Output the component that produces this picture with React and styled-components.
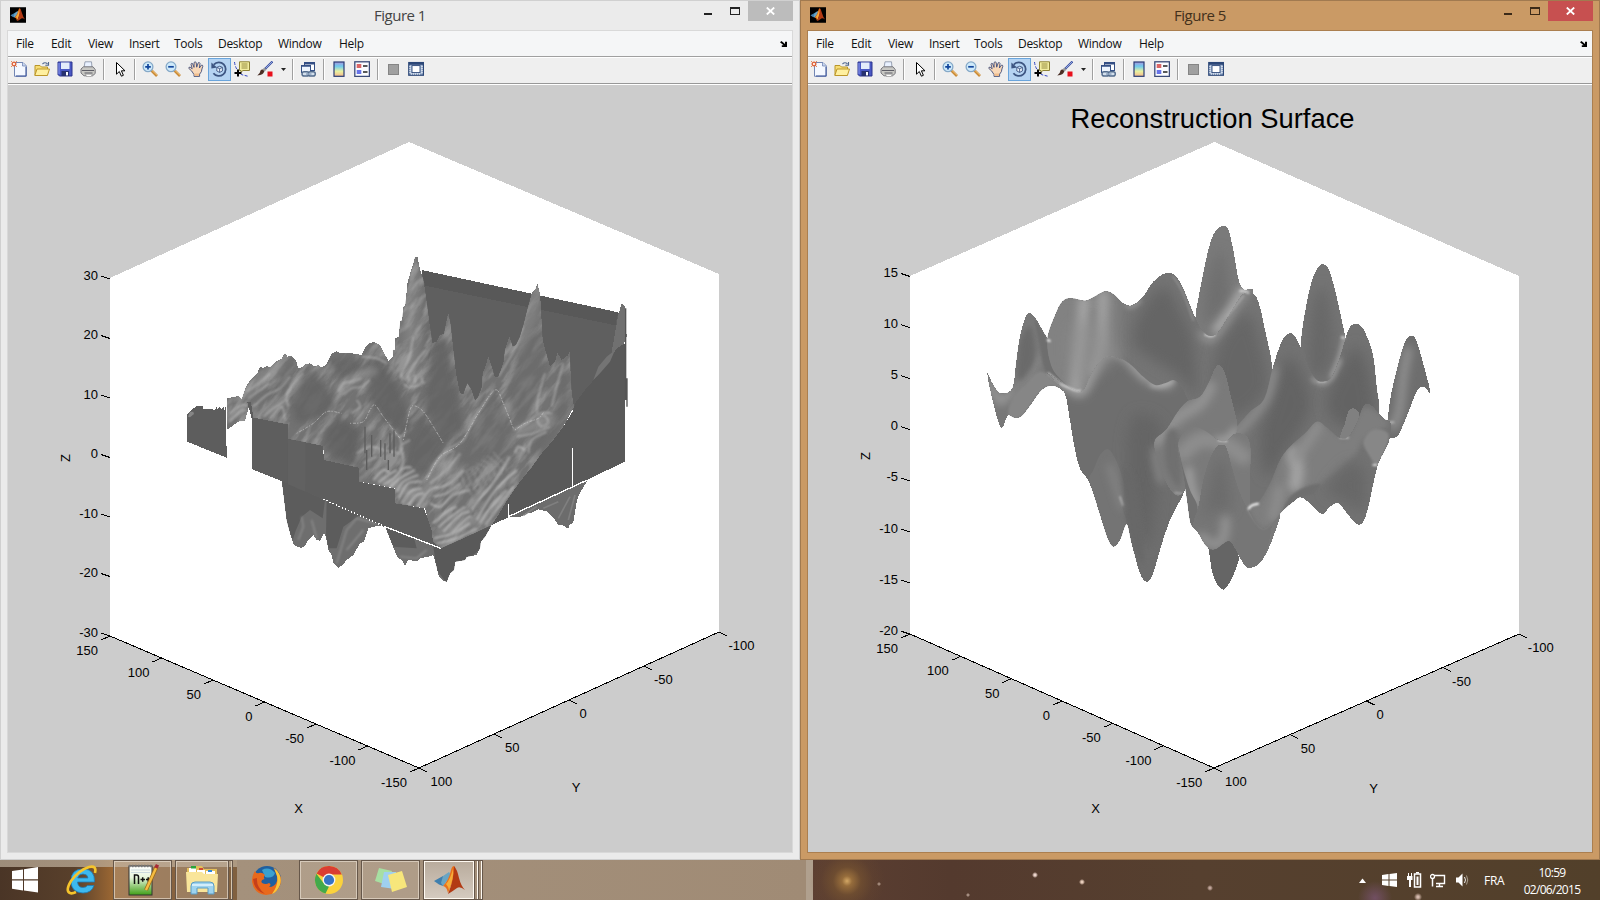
import React from "react";
import styled, { createGlobalStyle } from "styled-components";

const GlobalStyle = createGlobalStyle`
  * { box-sizing: border-box; }
  html, body { margin: 0; padding: 0; overflow: hidden; }
  body { width: 1600px; height: 900px; font-family: "Open Sans", "Noto Sans", sans-serif; }
`;

const Desktop = styled.div`
  display: flex;
  flex-direction: column;
  width: 1600px;
  height: 900px;
  overflow: hidden;
  background: #54402c;
`;

const Windows = styled.main`
  display: grid;
  grid-template-columns: 800px 800px;
  height: 860px;
`;

const Frame = styled.section`
  display: flex;
  flex-direction: column;
  height: 860px;
  padding: 0 7px 6px;
  border: 1px solid ${(p) => (p.$active ? "#a17a50" : "#d0d0d0")};
  background: ${(p) => (p.$active ? "#ca9a65" : "#ebebeb")};
`;

const TitleBar = styled.header`
  display: grid;
  grid-template-columns: 110px 1fr 110px;
  height: 29px;
  flex: none;
  align-items: start;
`;

const AppIcon = styled.div`
  padding: 6px 0 0 2px;
  line-height: 0;
`;

const Title = styled.h1`
  margin: 0;
  text-align: center;
  font-size: 15px;
  line-height: 28px;
  font-weight: 400;
  letter-spacing: -0.5px;
  color: ${(p) => (p.$active ? "#43301b" : "#444")};
`;

const Controls = styled.div`
  display: flex;
  justify-content: flex-end;
  height: 20px;
  margin-right: -1px;
  line-height: 0;
`;

const Close = styled.div`
  display: flex;
  width: 45px;
  height: 20px;
  align-items: center;
  justify-content: center;
  background: ${(p) => (p.$active ? "#c75050" : "#bcbcbc")};
`;

const Client = styled.div`
  display: flex;
  flex-direction: column;
  flex: 1;
  min-height: 0;
  border: 1px solid ${(p) => (p.$active ? "#ab7f50" : "#d9d9d9")};
  margin: 0 -1px;
  background: #ccc;
`;

const MenuBar = styled.nav`
  display: flex;
  height: 25px;
  flex: none;
  padding-left: 8px;
  background: #f5f6f7;
  align-items: center;
`;

const MenuItem = styled.span`
  width: ${(p) => p.$w}px;
  font-size: 12px;
  line-height: 25px;
  letter-spacing: -0.3px;
  color: #111;
  white-space: nowrap;
`;

const DockArrow = styled.div`
  margin-left: auto;
  padding-right: 5px;
  line-height: 0;
`;

const ToolBar = styled.div`
  display: flex;
  align-items: center;
  flex: none;
  height: 29px;
  padding-bottom: 2px;
  border-top: 1px solid #a0a0a0;
  border-bottom: 1px solid #fff;
  background: #efefef;
  box-shadow: inset 0 1px #fff, inset 0 -1px #989898;
`;

const Tool = styled.div`
  display: flex;
  align-items: center;
  justify-content: flex-start;
  width: ${(p) => p.$w || 23}px;
  height: 23px;
  padding: 0 0 1px ${(p) => (p.$w === 12 ? 3 : 2)}px;
  border: 1px solid ${(p) => (p.$on ? "#6aa5dc" : "transparent")};
  background: ${(p) => (p.$on ? "#b5d3f2" : "transparent")};
`;

const Separator = styled.div`
  width: 2px;
  height: 21px;
  margin: 0 3px;
  border-left: 1px solid #a0a0a0;
  border-right: 1px solid #fff;
`;

const Plot = styled.svg`
  display: block;
  flex: none;
  width: 784px;
  height: 767px;
  font-family: "Liberation Sans", Arial, sans-serif;
  font-size: 13px;
`;

/* ---------- drawing helpers ---------- */

const poly = (s) => `M${s.trim().split(/\s+/).join("L")}Z`;

const curve = (s, closed = true) => {
  const p = s.trim().split(/\s+/).map((q) => q.split(",").map(Number));
  const n = p.length;
  const at = (i) => (closed ? p[(i + n) % n] : p[Math.max(0, Math.min(n - 1, i))]);
  let d = `M${p[0]}`;
  for (let i = 0; i < (closed ? n : n - 1); i++) {
    const [a, b, c, e] = [at(i - 1), at(i), at(i + 1), at(i + 2)];
    d += `C${b[0] + (c[0] - a[0]) / 6},${b[1] + (c[1] - a[1]) / 6} ${c[0] - (e[0] - b[0]) / 6},${c[1] - (e[1] - b[1]) / 6} ${c[0]},${c[1]}`;
  }
  return closed ? d + "Z" : d;
};

/* ---------- toolbar glyphs ---------- */

const Ico = ({ children, w = 16, h = 16 }) => (
  <svg width={w} height={h} viewBox={`0 0 ${w} ${h}`}>{children}</svg>
);

const MatlabMark = () => (
  <g>
    <path d="M0 15 L9 10 L13 13.5 L9 20 L5 18.5Z" fill="#3f7fae" />
    <path d="M9 10 L15 6 L17 9 L13 15 L9 20 L7 17Z" fill="#69a5c4" />
    <path d="M9 20 Q15 14 17 4 Q18 0 20 0 Q22 2 20 12 L14 27 Q13 21 9 20Z" fill="#e8721c" />
    <path d="M20 0 Q23 3 25 12 Q27 20 31 24 Q26 20 23 22 Q19 25 14 28 Q20 14 20 0Z" fill="#b23a14" />
    <path d="M19 3 Q20 12 15 24 Q14 20 12 18 Q16 14 19 3Z" fill="#f6ad3a" />
  </g>
);

const Logo16 = () => (
  <svg width="16" height="16" viewBox="-1 -2 34 33">
    <rect x="-1" y="-2" width="34" height="33" fill="#000" />
    <MatlabMark />
  </svg>
);

const lens = (plus) => (
  <Ico>
    <path d="M9.5 9.5 L15 15" stroke="#c98a35" strokeWidth="2.6" />
    <path d="M10 9.4 L15 14.2" stroke="#f2c27a" strokeWidth="1" />
    <circle cx="6" cy="5.8" r="4.9" fill="#cfeafa" stroke="#86a9c8" strokeWidth="1.3" />
    <path d={plus ? "M3.2 5.8H8.8M6 3V8.6" : "M3.2 5.8H8.8"} stroke="#12459c" strokeWidth="1.7" />
  </Ico>
);

const icons = {
  new: (
    <Ico>
      <path d="M3.5 1.5H12L15.3 4.8V15.3H3.5Z" fill="#f4f8ff" stroke="#7286b4" />
      <path d="M5 15H15V6" fill="none" stroke="#3c549a" />
      <path d="M11.5 1.5V5H15" fill="#c9d8f1" stroke="#7286b4" strokeWidth=".8" />
      <circle cx="3" cy="3" r="1.8" fill="#fff" stroke="#e0663c" strokeWidth="1.4" />
      <path d="M0 0L1 1M6 0L5 1M0 6L1 5M6 6L5 5" stroke="#e08a5c" />
    </Ico>
  ),
  open: (
    <Ico>
      <path d="M1 14V4.5H6L7.5 6H13.5V14Z" fill="#f7dd74" stroke="#b9962a" />
      <path d="M.8 14.5L3 8H15.5L13.4 14.5Z" fill="#fff0a0" stroke="#bd972a" />
      <path d="M8.5 3Q11 .5 13.5 3M14.5 1V4.2H11.3" fill="none" stroke="#51688f" strokeWidth="1.1" />
    </Ico>
  ),
  save: (
    <Ico>
      <path d="M1 1H15V15H2.5L1 13.5Z" fill="#4a58c4" stroke="#2d358e" />
      <rect x="4" y="1.5" width="8.5" height="6.5" fill="#e4ecfb" />
      <rect x="4.5" y="10" width="7.5" height="5" fill="#27316f" />
      <rect x="9" y="11" width="2" height="3.4" fill="#fff" />
      <path d="M2 2V13" stroke="#8e9cf0" />
    </Ico>
  ),
  print: (
    <Ico>
      <path d="M4 7L5 .8H11.5L12 7Z" fill="#e9f1ff" stroke="#8e98aa" strokeWidth=".9" />
      <path d="M1 8L3.5 5.8H13L15.2 8.5V12.5L12.5 14.8H4L1 12Z" fill="#c8c8c4" stroke="#77777c" />
      <path d="M2 9.5H14M4.5 12L12.5 12" stroke="#5d5d66" strokeWidth="1.1" />
      <path d="M5.5 13.2H12.5L11 15.6H6.5Z" fill="#fff" stroke="#888" strokeWidth=".6" />
    </Ico>
  ),
  arrow: (
    <Ico>
      <path d="M5.5 1.5V13.2L8.3 10.5L10.4 15.2L12.4 14.3L10.4 9.8H14Z" fill="#fff" stroke="#000" />
    </Ico>
  ),
  zoomIn: lens(true),
  zoomOut: lens(false),
  hand: (
    <Ico>
      <path d="M3.5 9.8L.8 7.4Q.6 5.8 2.2 6.2L4.2 7.8L3 3.2Q3.2 1.8 4.6 2.6L6 6.4L6.1 1.5Q7 .1 8.2 1.5L8.7 6.2L10.2 1.8Q11.5 1 12 2.3L11.4 7L13.3 4.2Q15 3.8 14.8 5.3Q13.8 8 13.4 10.6L11.6 13.2V15.4H6V13.5Z" fill="#f8d8b8" stroke="#3f4d7a" strokeWidth=".9" />
      <path d="M6.5 12.5H11V15H6.5Z" fill="#f1bd8c" />
    </Ico>
  ),
  rotate: (
    <Ico>
      <path d="M2.8 3.6A6.8 6.8 0 1 1 2.4 12.2" fill="none" stroke="#3d5582" strokeWidth="1.8" />
      <path d="M.4 1.5V7.5L6 6.5Z" fill="#3d5582" />
      <path d="M5.8 6.4L8.8 5.2L11.4 6.4V10L8.6 11.4L5.8 10ZM5.8 6.4L8.6 7.7L11.4 6.4M8.6 7.7V11.4" fill="#e8f1fb" stroke="#3d5582" strokeWidth=".9" />
    </Ico>
  ),
  tip: (
    <Ico>
      <path d="M.5 1Q1 6 4 10T9 14L15 15.5" fill="none" stroke="#3347c4" strokeDasharray="3 1.5" />
      <path d="M5.5 .8H15.5V9.5H9L7 11V9.5H5.5Z" fill="#f3eda0" stroke="#8d8236" />
      <path d="M7.5 3H13.5M7.5 5H13.5M7.5 7H13.5" stroke="#8d8236" strokeWidth=".9" />
      <path d="M4 8.5V15.5M.5 12H7.5" stroke="#000" strokeWidth="2" />
    </Ico>
  ),
  brush: (
    <Ico>
      <path d="M15.5 .5L7.5 8.5" stroke="#3c51a0" strokeWidth="2.2" />
      <path d="M15.5 .5L9 7" stroke="#aabdf0" strokeWidth=".8" />
      <path d="M8.5 7.5L6.2 9.8" stroke="#999" strokeWidth="3" />
      <path d="M7.2 10.3Q6.6 14 .3 14.5Q3.5 12 3.5 9.6Q5.4 7.2 7.2 10.3Z" fill="#4a2f25" />
      <rect x="10.5" y="10.5" width="5" height="5" fill="#e8101c" />
    </Ico>
  ),
  caret: <Ico w={5} h={3}><path d="M0 0H5L2.5 3Z" fill="#222" /></Ico>,
  link: (
    <Ico>
      <rect x="4.5" y="1.5" width="10" height="8" fill="#fff" stroke="#344f84" />
      <path d="M4.5 2.5H14.5" stroke="#344f84" strokeWidth="2" />
      <rect x="1.5" y="4.5" width="9" height="7" fill="#eef5fe" stroke="#344f84" />
      <path d="M1.5 5H10.5" stroke="#344f84" strokeWidth="1.5" />
      <rect x="2" y="10.8" width="7" height="4.2" rx="2.1" fill="#d3dfec" stroke="#536c8d" strokeWidth="1.4" />
      <rect x="8.3" y="10.8" width="7" height="4.2" rx="2.1" fill="#d3dfec" stroke="#536c8d" strokeWidth="1.4" />
      <path d="M6 13H11.5" stroke="#8fa5bf" strokeWidth="1.5" />
    </Ico>
  ),
  colorbar: (
    <Ico>
      <defs>
        <linearGradient id="cbar" x1="0" y1="0" x2="0" y2="1">
          <stop offset="0" stopColor="#a797dd" /><stop offset=".3" stopColor="#6fcbee" />
          <stop offset=".65" stopColor="#e9f2a0" /><stop offset="1" stopColor="#f5b98c" />
        </linearGradient>
      </defs>
      <rect x="3" y="1" width="10" height="14.3" fill="url(#cbar)" stroke="#283b74" strokeWidth="1.2" />
    </Ico>
  ),
  legend: (
    <Ico>
      <rect x=".8" y=".8" width="14.6" height="14.6" fill="#fafcff" stroke="#3b4b78" strokeWidth="1.3" />
      <rect x="2.7" y="3" width="4.6" height="4" fill="#da6565" />
      <rect x="2.7" y="9" width="4.6" height="4" fill="#6773e8" />
      <path d="M9 5H13.5M9 11H13.5" stroke="#222" strokeWidth="1.3" />
    </Ico>
  ),
  stop: <Ico><rect x="3.5" y="3.5" width="10" height="10" fill="#a0a0a0" stroke="#858585" /></Ico>,
  dock: (
    <Ico>
      <rect x=".8" y="1.6" width="14.6" height="12.6" fill="#a8bbd7" stroke="#2c4777" strokeWidth="1.3" />
      <path d="M1 2.8H15" stroke="#2c4777" strokeWidth="2" />
      <rect x="4" y="4.6" width="8" height="7" fill="#fff" stroke="#2c4777" strokeWidth=".9" />
      <path d="M2 5V13M14 5V13M3 13H13" stroke="#fff" strokeDasharray="1 1" />
    </Ico>
  ),
};

const tools = ["new", "open", "save", "print", "|", "arrow", "|", "zoomIn", "zoomOut", "hand", "rotate", "tip", "brush", "caret", "|", "link", "|", "colorbar", "legend", "|", "stop", "dock"];
const menus = [["File", 35], ["Edit", 37], ["View", 41], ["Insert", 45], ["Tools", 44], ["Desktop", 60], ["Window", 61], ["Help", 30]];

/* ---------- axes ---------- */

const Axes = ({ box, x, y, z, names }) => (
  <g>
    <path d={poly(box)} fill="#fff" shapeRendering="crispEdges" />
    <g stroke="#000" fill="none" shapeRendering="crispEdges">
      <path d={`M${x.from}L${x.to}L${y.to}`} />
      {x.labels.map((l, i) => {
        const t = i / (x.labels.length - 1);
        return <path key={i} d={`M${x.from[0] + (x.to[0] - x.from[0]) * t},${x.from[1] + (x.to[1] - x.from[1]) * t}l-9,4`} />;
      })}
      {y.labels.map((l, i) => {
        const t = i / (y.labels.length - 1);
        return <path key={i} d={`M${x.to[0] + (y.to[0] - x.to[0]) * t},${x.to[1] + (y.to[1] - x.to[1]) * t}l8,4`} />;
      })}
      {z.labels.map((l, i) => <path key={i} d={`M${x.from[0]},${z.y0 + z.step * i}l-9,-3`} />)}
    </g>
    {z.labels.map((l, i) => <text key={l} x={x.from[0] - 12} y={z.y0 + z.step * i + 0.5} textAnchor="end">{l}</text>)}
    {x.labels.map((l, i) => <text key={l} x={x.text[0] + x.text[2] * i} y={x.text[1] + x.text[3] * i} textAnchor="end">{l}</text>)}
    {y.labels.map((l, i) => <text key={l} x={y.text[0] + y.text[2] * i} y={y.text[1] + y.text[3] * i}>{l}</text>)}
    <text x={names.x[0]} y={names.x[1]} textAnchor="middle">X</text>
    <text x={names.y[0]} y={names.y[1]} textAnchor="middle">Y</text>
    <text transform={`translate(${names.z}) rotate(-90)`} textAnchor="middle">Z</text>
  </g>
);

/* ---------- figure 1: measured terrain ---------- */

const terrainOutline = poly(`170,475 205,468 215,477 228,440 245,415 262,400 270,380 278,384 290,378 300,381 318,365 335,356 345,338 352,350 365,347 378,362 385,385
 395,382 408,372 420,370 435,380 443,374 455,382 468,375 485,340 500,334 512,340 545,340 575,345 588,318 600,308 615,307 630,315 640,335 655,362 668,352 668,330 676,328 676,295 687,290 690,245 697,240 700,200 706,198 712,130 722,95
 730,70 735,52 743,52 748,80 760,120 768,170 777,240 787,310 800,305 810,285 822,282 828,250 835,218 842,255 848,310 858,400 870,460 880,463 892,430 905,450 915,482 925,470 936,440 938,400 945,385 955,348 965,380 975,412 985,410 1000,370 1005,330
 1018,288 1028,320 1038,315 1050,290 1062,250 1072,210 1085,160 1095,150 1102,130 1110,160 1112,190 1118,300 1130,345 1140,380 1155,365 1162,338 1175,360 1188,350 1195,345 1198,325 1202,400 1205,460 1212,500 1180,560 1150,600 1115,640 1085,682 1050,725 1015,775 985,825 965,855 880,895 812,925 790,905 765,805 675,790 675,745 568,725 566,683 462,660 460,618 355,598 353,553 248,535 240,490 225,542 205,545 170,570`);

const underOutline = poly(`335,720 345,800 350,840 360,880 372,915 392,924 405,918 412,905 430,885 440,900 450,902 462,880 468,890 475,930 485,945 490,970 505,983 518,975 530,960 550,945 570,910 582,905 595,865 620,858 645,858 665,910 675,935 685,955 695,960 705,977 715,960 740,964 750,955 775,950 790,945 800,980 805,1005 818,1022 830,1025 840,1000 852,990 855,965 885,960 890,950 920,945 930,925 932,905 945,890 965,855 810,900 600,780 400,720`);

const streaks = [
  "505,455 520,430 545,425 575,415", "520,465 545,445 575,440 600,420", "545,520 570,500 560,480", "230,455 265,430 300,400",
  "235,475 270,450 300,430", "250,500 290,465 330,445 360,410", "280,530 310,505 345,480 365,440", "300,535 335,500 345,540", "355,500 350,460 380,420 400,400", "180,520 215,495 235,500", "180,545 210,515 232,510",
  "575,350 620,355 650,370", "690,410 715,360 730,290", "705,420 735,370 765,330", "695,395 695,420", "735,405 735,430", "715,405 717,425", "755,410 757,430", "700,432 720,442 745,436 765,425",
  "790,680 830,630 880,600 910,540 970,450", "770,715 810,650 850,630", "780,730 830,690 870,640", "700,650 690,620 720,600",
  "1030,570 1070,550 1110,520 1145,520", "1040,590 1090,580 1140,560", "1100,540 1120,525 1135,545 1115,560 1100,540",
  "1125,400 1105,470 1100,520", "1180,370 1160,440 1145,500", "985,410 1030,335 1060,260", "1075,640 1085,600 1130,575",
  "690,590 700,660 690,690", "660,560 690,590 710,570", "560,640 600,620 640,630 690,640", "580,670 620,650",
];

const ribs = [
  "610,720 640,690 660,700", "625,728 655,705 680,690", "640,735 670,715 700,685 725,682", "660,742 690,715 735,690", "680,755 700,725 745,705", "685,775 715,730 755,725",
  "695,790 720,755 755,745", "715,795 740,765 762,760", "740,800 775,755 800,740", "790,850 830,815 860,800", "805,862 850,825 885,800", "820,875 870,825 900,815", "845,880 890,835 905,830",
  "780,790 810,800 850,765 900,750", "790,770 830,760 870,730", "800,745 840,730 880,690", "920,840 945,795 985,740 1040,690", "930,850 960,805 1010,750", "945,855 980,810 1030,740", "905,810 925,780 965,735 1020,650", "790,895 850,880 900,850", "800,910 860,895 920,865", "1035,640 1045,620 1065,630",
];

const fineRibs = [0, 1, 2, 3, 4, 5, 6, 7].map((i) => `${850 + i * 17},${720 - i * 12} ${870 + i * 17},${700 - i * 6} ${885 + i * 17},${735 - i * 9} ${905 + i * 15},${765 - i * 10}`);

const Terrain = () => (
  <g transform="translate(162,155) scale(.33333)">
    <defs>
      <filter id="ripples" x="0" y="0" width="100%" height="100%" colorInterpolationFilters="sRGB">
        <feTurbulence type="fractalNoise" baseFrequency="0.012 0.045" numOctaves="4" seed="8" />
        <feColorMatrix values="0 0 0 0 .8  0 0 0 0 .8  0 0 0 0 .8  3 0 0 0 -1.2" />
        <feComposite in2="SourceGraphic" operator="in" />
      </filter>
      <filter id="soft1" x="-20%" y="-20%" width="140%" height="140%"><feGaussianBlur stdDeviation="9" /></filter>
      <filter id="soft1s" x="-20%" y="-20%" width="140%" height="140%"><feGaussianBlur stdDeviation="2.4" /></filter>
      <clipPath id="terrainClip"><path d={terrainOutline} /></clipPath>
      <clipPath id="underClip"><path d={underOutline} /></clipPath>
      <linearGradient id="peakFill" x1="0" x2="1"><stop offset="0" stopColor="#6c6c6c" /><stop offset=".45" stopColor="#828282" /><stop offset="1" stopColor="#666" /></linearGradient>
    </defs>

    <path d={poly("755,90 1345,217 1370,290 1290,420 1210,510 860,560 780,330")} fill="#5f5f5f" shapeRendering="crispEdges" />
    <path d={poly("755,90 1345,217 1336,256 765,137")} fill="#585858" shapeRendering="crispEdges" />
    <path d={poly("51,525 62,512 80,498 98,499 100,506 135,509 140,500 143,510 150,497 153,510 160,500 164,510 168,495 170,653 51,605")} fill="#5d5d5d" shapeRendering="crispEdges" />
    <path d="M54 530L60 515 70 515 72 522 60 532Z" fill="#858585" />

    <path d={underOutline} fill="#6e6e6e" shapeRendering="crispEdges" />
    <g clipPath="url(#underClip)">
      <path d={poly("335,720 470,780 468,885 475,925 500,925 520,860 570,825 645,858 670,920 740,925 730,885 800,925 800,780")} fill="#5c5c5c" />
      <path d={poly("335,720 465,780 458,835 420,810 395,830 378,870 368,900 350,850")} fill="#5c5c5c" />
      <path d={poly("790,920 812,925 965,855 940,920 890,960 830,1030 800,990")} fill="#595959" />
      <g stroke="#8f8f8f" strokeWidth="4" fill="none" filter="url(#soft1s)"><path d="M385 900L400 860 395 830M440 895L425 840M500 970L530 870 560 835 620 850M530 930L580 870M690 950L740 955 770 930" /></g>
    </g>

    <path d={terrainOutline} fill="#727272" shapeRendering="crispEdges" />
    <g clipPath="url(#terrainClip)">
      <path d={poly("735,50 765,150 787,310 760,440 720,440 670,380 690,250")} fill="url(#peakFill)" />
      <g transform="rotate(-52 700 600)">
        <rect x="50" y="-100" width="1300" height="1400" filter="url(#ripples)" opacity=".34" />
      </g>
      <g filter="url(#soft1)" opacity=".85">
        <path d={poly("590,370 625,350 690,450 720,540 720,600 640,540 600,480")} fill="#626262" />
        <path d={poly("390,430 430,390 480,460 500,500 430,540 380,550 365,490")} fill="#636363" />
        <path d={poly("475,360 560,350 580,390 510,420")} fill="#656565" />
        <path d={poly("790,310 830,290 860,450 880,570 810,620 760,500")} fill="#636363" />
        <path d={poly("470,570 510,530 570,570 560,680 460,640")} fill="#606060" />
        <path d={poly("750,520 820,620 770,700 700,690 720,600")} fill="#636363" />
      </g>
      <g filter="url(#soft1)" opacity=".6">
        <path d={poly("970,450 1000,500 1035,590 1000,660 920,660 880,690 850,700 900,560")} fill="#696969" />
        <path d={poly("1060,300 1110,250 1130,400 1080,520 1040,550 1010,460")} fill="#696969" />
        <path d={poly("1180,360 1205,480 1150,590 1090,660 1080,600 1150,540")} fill="#686868" />
        <path d={poly("340,400 370,360 380,390 330,450 280,480")} fill="#666" />
        <path d={poly("1085,160 1105,140 1105,230 1060,330 1030,360")} fill="#858585" />
        <path d="M500 450Q570 400 620 390M200 480L330 370M280 520L345 480M620 710L750 770 850 650M1040 580L1150 530M800 880L950 830" stroke="#a0a0a0" strokeWidth="22" fill="none" />
      </g>
      <g fill="none" stroke="#c0c0c0" strokeWidth="5" opacity=".6" filter="url(#soft1s)">
        {streaks.map((s) => <path key={s} d={curve(s, false)} />)}
      </g>
      <g fill="none" stroke="#d2d2d2" strokeWidth="7" opacity=".52" filter="url(#soft1s)">
        {ribs.map((s) => <path key={s} d={curve(s, false)} />)}
      </g>
      <g fill="none" stroke="#999" strokeWidth="4" opacity=".6" filter="url(#soft1s)">
        {fineRibs.map((s) => <path key={s} d={curve(s, false)} />)}
      </g>
      <g fill="none" stroke="#cfcfcf" strokeWidth="3" strokeDasharray="4 5 9 3" opacity=".6">
        <path d={curve("380,580 430,550 470,515 515,520", false)} />
        <path d={curve("1035,570 1065,550 1105,535 1120,518", false)} />
        <path d={curve("540,550 580,545 600,510 615,495 640,530 690,595", false)} />
        <path d={curve("700,600 720,510 735,498 760,515 790,560 820,610", false)} />
        <path d={curve("770,720 810,650 870,610 925,520 975,450 1000,490 1030,565", false)} />
      </g>
      <path d="M585 640V560M605 650V585M632 650V600M645 660V610M660 640V580M672 650V570M590 690V630M655 690V660" stroke="#5c5c5c" strokeWidth="4" />
    </g>

    <path d={poly("1325,335 1335,280 1345,225 1355,190 1365,198 1370,290 1362,310 1338,340")} fill="#707070" shapeRendering="crispEdges" />
    <path d={poly("1365,310 1340,325 1310,370 1280,410 1245,450 1215,490 1212,508 1180,560 1150,600 1115,640 1085,682 1050,725 1015,775 985,825 965,855 1015,832 1250,720 1365,665")} fill="#595959" shapeRendering="crispEdges" />
    <path d={poly("1270,420 1285,380 1310,350 1335,330 1320,365 1290,400")} fill="#747474" />
    <path d="M1367 205V480M1371 415V500" stroke="#555" strokeWidth="4" />
    <path d={poly("232,487 243,487 250,533 353,553 354,597 460,618 461,660 566,683 567,725 674,746 675,790 762,805 785,870 790,918 645,862 465,780 340,725 247,688 245,535")} fill="#5e5e5e" shapeRendering="crispEdges" />
    <path d={poly("354,597 406,607 406,755 354,733")} fill="#616161" />

    <path d={poly("1018,830 1050,832 1070,818 1085,818 1105,808 1130,814 1155,840 1165,855 1178,855 1195,867 1198,855 1210,848 1220,785 1226,765 1252,722 1100,793")} fill="#6c6c6c" shapeRendering="crispEdges" />
    <path d="M1120 805L1165 785M1165 835L1200 770M1195 840L1215 765M1060 826L1100 800" stroke="#7f7f7f" strokeWidth="5" />
    <g stroke="#fff" strokeWidth="4" fill="none" shapeRendering="crispEdges">
      <path d="M460 778L645 860" strokeDasharray="4 6" />
      <path d="M645 860L812 925M1015 830L1252 720M1207 625V742M1015 793V830" />
    </g>
  </g>
);

/* ---------- figure 5: reconstructed surface ---------- */

const sheets = {
  tipLeft: "82,490 100,525 123,550 157,535 168,460 180,380 195,325 207,309 225,322 250,365 268,392 300,430 340,520 315,545 300,535 275,527 245,540 210,587 185,618 165,624 145,615 135,635 125,654 112,625 95,560",
  peakB: "706,330 720,240 745,120 765,65 790,48 805,60 820,120 835,205 850,238 880,250 840,400 720,400",
  peakC: "1022,410 1040,280 1060,200 1078,168 1090,163 1105,175 1125,240 1145,330 1155,390 1150,540 1030,540",
  back: "262,388 290,305 310,272 335,265 375,272 400,262 435,244 460,252 490,280 515,286 545,265 580,215 610,192 640,192 665,225 690,285 708,328 730,365 752,378 775,365 810,310 845,255 875,248 895,275 915,360 937,478 930,600 830,670 700,640 500,620 400,600 345,545 310,515 275,470",
  left: "262,490 310,520 345,540 370,540 400,480 440,440 500,455 550,500 585,525 615,520 640,510 660,525 685,575 720,700 680,830 630,930 600,1020 578,1095 560,1115 540,1090 515,1000 500,942 480,990 460,1010 443,985 425,930 400,850 383,808 362,780 345,720 328,620 312,545",
  peakE: "1283,635 1292,560 1310,480 1335,395 1355,377 1370,395 1395,480 1411,549 1392,531 1370,545 1340,620 1315,675 1298,683 1283,680",
  right: "937,478 955,420 970,385 988,370 1005,378 1025,420 1045,470 1068,508 1090,515 1115,500 1140,440 1165,360 1185,342 1205,350 1225,390 1240,440 1250,530 1258,605 1240,700 1100,760 980,850 870,900 820,800 790,700 830,650 870,605 912,568",
  peakH: "584,692 620,658 650,610 680,575 720,560 745,520 765,475 778,465 795,490 815,570 832,655 800,700 760,760 700,800 665,852 640,850 610,800 590,740",
  front: "654,710 665,675 685,655 705,650 740,665 775,690 800,692 830,670 870,700 870,880 900,940 960,905 940,980 910,1045 872,1074 850,1060 825,1015 805,993 765,1018 740,1010 715,970 692,940 680,860 667,780",
  lobe: "1140,690 1155,640 1165,605 1180,595 1198,615 1190,690",
  rightFront: "866,895 893,880 930,820 960,750 990,710 1035,670 1070,635 1100,652 1135,682 1160,683 1185,650 1210,590 1228,583 1245,597 1270,625 1292,640 1288,690 1275,720 1255,760 1240,820 1225,890 1210,935 1192,943 1165,915 1135,880 1110,890 1085,912 1050,880 1022,862 1000,875 970,900 940,935 910,957 885,935",
  peakJ: "700,940 715,890 730,810 750,745 770,710 785,704 800,715 818,780 838,845 860,890 885,935 910,957 935,950 910,1045 872,1074 850,1060 825,1015 805,993 765,1018 740,1010 715,970",
};

const Sheet = ({ id, fill, children }) => (
  <g>
    <clipPath id={`c-${id}`}><path d={curve(sheets[id])} /></clipPath>
    <path d={curve(sheets[id])} fill={fill} shapeRendering="crispEdges" />
    <g clipPath={`url(#c-${id})`}>{children}</g>
  </g>
);

const Glow = ({ d, c = "#a0a0a0", w = 16, f }) => (
  <path d={curve(d, false)} fill="none" stroke={c} strokeWidth={w} filter={`url(#${f || (w >= 14 ? "b14" : "b8")})`} strokeLinecap="round" />
);

const Shade = ({ d, c = "#646464", f = "b20" }) => <path d={curve(d)} fill={c} filter={`url(#${f})`} />;

const Surface = () => (
  <g transform="translate(152,125) scale(.33333)">
    <defs>
      {[[3, 3], [8, 8], [14, 12], [20, 20]].map(([n, s]) => (
        <filter key={n} id={`b${n}`} filterUnits="userSpaceOnUse" x="0" y="0" width="1500" height="1200"><feGaussianBlur stdDeviation={s} /></filter>
      ))}
    </defs>
    <Sheet id="peakC" fill="#747474">
      <Shade d="1060,280 1090,230 1110,300 1120,420 1090,500 1045,470" c="#686868" />
      <Glow d="1155,380 1140,440 1115,500" c="#a5a5a5" w={12} />
    </Sheet>
    <Sheet id="peakB" fill="#7a7a7a">
      <Shade d="745,220 780,120 800,200 800,280 740,340" c="#6e6e6e" />
      <Glow d="850,240 820,290 770,360" c="#b0b0b0" w={24} />
    </Sheet>
    <Sheet id="tipLeft" fill="#787878">
      <Glow d="90,520 120,575 155,545" c="#a8a8a8" w={14} />
      <Glow d="165,540 210,495 235,440" c="#8c8c8c" w={16} />
      <Shade d="180,400 210,350 225,420 215,470 175,510" c="#6b6b6b" f="b8" />
      <path d={curve("160,560 195,525 240,485 300,515 345,545 300,535 275,527 245,540 210,587 180,622 145,615")} fill="#868686" filter="url(#b3)" />
      <path d={curve("225,330 245,360 268,392 300,440 330,540 290,515 255,480 238,400")} fill="#6e6e6e" filter="url(#b3)" />
      <Glow d="265,490 290,510 310,525" c="#c0c0c0" w={6} f="b3" />
    </Sheet>
    <Sheet id="back" fill="#747474">
      <path d="M230 240H480V560H230Z" fill="#828282" filter="url(#b20)" />
      <Shade d="540,310 610,230 660,300 700,400 710,560 660,500 580,450 520,400" c="#656565" />
      <Shade d="780,400 860,310 900,400 920,540 820,620 760,530" c="#666" />
      <Glow d="372,275 365,380 345,540" c="#a5a5a5" w={34} />
      <Glow d="430,255 425,340 420,420 400,480" c="#a0a0a0" w={34} />
      <Glow d="400,300 395,380" c="#848484" w={10} />
      <Glow d="500,286 515,290 540,272" c="#9c9c9c" w={10} />
      <Glow d="725,372 752,388 790,345 835,275 860,248" c="#9f9f9f" w={16} />
      <Glow d="735,373 752,379 765,374" c="#eee" w={4} f="b3" />
      <Glow d="640,200 670,250 700,330" c="#8a8a8a" w={6} f="b3" />
    </Sheet>
    <Glow d="840,243 852,243 866,249" c="#e2e2e2" w={5} f="b3" />
    <Glow d="850,258 825,290 800,320" c="#a8a8a8" w={5} f="b3" />
    <Glow d="263,390 269,393" c="#eee" w={6} f="b3" />
    <Sheet id="left" fill="#6e6e6e">
      <Glow d="280,490 345,535 365,535 395,475 430,420 490,425 560,495 620,515" c="#9d9d9d" w={44} />
      <Shade d="520,620 600,640 600,750 570,1000 530,950 500,760" c="#656565" />
      <Glow d="575,525 600,527 640,512" c="#b8b8b8" w={9} />
      <Glow d="604,812 590,760 586,720" c="#8a8a8a" w={20} />
      <path d={curve("388,805 400,780 420,735 442,717 460,735 480,780 493,830 488,890 500,942 480,990 460,1010 443,985 425,930 400,850")} fill="#747474" />
      <Glow d="450,770 475,850 488,890" c="#868686" w={18} />
      <Glow d="480,860 489,885" c="#bbb" w={5} f="b3" />
      <Shade d="488,780 520,800 540,900 550,1060 520,1010 500,930" c="#686868" f="b8" />
    </Sheet>
    <path d={curve("325,400 350,340 420,330 445,400 480,425 440,470 400,500 370,530 345,530 335,500")} fill="#8e8e8e" filter="url(#b20)" opacity=".6" />
    <Glow d="300,522 345,541 362,541" c="#e0e0e0" w={4} f="b3" />
    <Sheet id="right" fill="#727272">
      <Shade d="960,480 990,440 1030,500 1050,600 980,720 920,800 900,680 930,580" c="#646464" />
      <Shade d="1150,460 1190,410 1230,500 1235,640 1130,640 1100,570" c="#646464" />
      <Glow d="1060,508 1088,520 1115,503 1140,450" c="#a2a2a2" w={12} />
      <Glow d="1075,514 1096,513" c="#eee" w={4} f="b3" />
      <Glow d="940,480 915,570 830,670 790,700" c="#8c8c8c" w={26} />
    </Sheet>
    <Glow d="1145,382 1154,384" c="#ddd" w={5} f="b3" />
    <Sheet id="peakE" fill="#6e6e6e">
      <Glow d="1345,420 1330,500 1318,600 1300,650" c="#959595" w={22} />
      <Glow d="1283,638 1300,637" c="#bbb" w={6} f="b3" />
    </Sheet>
    <Sheet id="peakH" fill="#7a7a7a">
      <Glow d="590,690 650,625 720,580 750,530" c="#939393" w={36} />
      <Shade d="620,670 650,660 660,720 660,830 620,770" c="#6f6f6f" f="b8" />
      <Glow d="770,690 800,692 828,660" c="#b0b0b0" w={16} />
      <Glow d="645,848 668,851" c="#a0a0a0" w={6} f="b3" />
    </Sheet>
    <path d="M744 1005L755 1080C765 1120 780 1139 790 1139S822 1100 838 1045L820 985Z" fill="#656565" shapeRendering="crispEdges" />
    <Sheet id="front" fill="#7a7a7a">
      <Glow d="668,730 720,690 790,700 850,740" c="#8d8d8d" w={50} />
      <Glow d="685,780 695,840 710,880" c="#a5a5a5" w={22} />
      <Glow d="775,691 800,693" c="#e8e8e8" w={4} f="b3" />
      <path d={curve("654,710 668,770 690,840 712,890 700,945 690,935 678,860 662,780")} fill="#707070" />
    </Sheet>
    <Sheet id="lobe" fill="#808080" />
    <Sheet id="rightFront" fill="#727272">
      <path d={curve("866,895 893,880 930,820 960,750 990,710 1035,670 1070,635 1120,665 1160,683 1205,600 1240,600 1285,640 1260,660 1210,690 1180,740 1080,822 1030,835 995,860 965,905 910,957")} fill="#7e7e7e" filter="url(#b8)" />
      <Glow d="1000,730 1012,780 1005,825" c="#a3a3a3" w={40} />
      <Glow d="960,840 940,920" c="#8d8d8d" w={30} />
      <Glow d="1075,645 1040,700 1010,740" c="#8e8e8e" w={30} />
      <Shade d="1100,840 1170,760 1215,790 1210,900 1150,870" c="#686868" />
      <path d={curve("1210,700 1225,670 1250,658 1285,672 1275,720 1250,765 1230,740")} fill="#878787" filter="url(#b3)" />
      <Glow d="1140,683 1165,683" c="#e0e0e0" w={4} f="b3" />
      <Glow d="1240,765 1250,765" c="#ddd" w={6} f="b3" />
      <path d={curve("970,902 990,862 1030,834 1080,822 1060,850 1022,862 1000,875")} fill="#6e6e6e" filter="url(#b3)" />
    </Sheet>
    <Sheet id="peakJ" fill="#767676">
      <Shade d="760,780 785,740 805,800 810,900 760,900 730,930" c="#6c6c6c" />
      <Glow d="725,980 760,1005 790,985 797,930" c="#949494" w={26} />
      <path d={curve("862,897 893,880 940,880 960,905 935,940 910,957 885,935")} fill="#858585" filter="url(#b3)" />
    </Sheet>
    <Glow d="866,896 876,886 894,881" c="#fff" w={6} f="b3" />
  </g>
);

/* ---------- window ---------- */

const MinMax = ({ color }) => (
  <svg width="44" height="20" viewBox="0 0 44 20" shapeRendering="crispEdges">
    <path d="M0 12H8V14H0ZM26 6H36V14H26ZM27 8V13H35V8Z" fill={color} fillRule="evenodd" />
  </svg>
);

const FigureWindow = ({ title, active, children }) => (
  <Frame $active={active}>
    <TitleBar>
      <AppIcon><Logo16 /></AppIcon>
      <Title $active={active}>{title}</Title>
      <Controls>
        <MinMax color={active ? "#3b2a18" : "#222"} />
        <Close $active={active}>
          <svg width="9" height="8" viewBox="0 0 9 8"><path d="M.8 .5L8.2 7.5M8.2 .5L.8 7.5" stroke="#fff" strokeWidth="1.8" /></svg>
        </Close>
      </Controls>
    </TitleBar>
    <Client $active={active}>
      <MenuBar>
        {menus.map(([m, w]) => <MenuItem key={m} $w={w}>{m}</MenuItem>)}
        <DockArrow>
          <svg width="7" height="6" viewBox="0 0 7 6"><path d="M0 1.2L1.5 0L5 3V.8H7V6H1.8V4.2H3.6Z" fill="#000" /></svg>
        </DockArrow>
      </MenuBar>
      <ToolBar>
        {tools.map((t, i) => (t === "|" ? <Separator key={i} /> : <Tool key={i} $on={t === "rotate"} $w={t === "caret" ? 12 : 23}>{icons[t]}</Tool>))}
      </ToolBar>
      {children}
    </Client>
  </Frame>
);

/* ---------- taskbar ---------- */

const Taskbar = styled.footer`
  display: flex;
  height: 40px;
  background:
    radial-gradient(circle at 847px 21px, #d3a765 0, rgba(165, 120, 62, .8) 5px, rgba(125, 88, 48, .55) 14px, rgba(110, 75, 45, .2) 26px, transparent 38px),
    radial-gradient(circle at 1035px 15px, #ecd5cc 0 1px, transparent 3px),
    radial-gradient(circle at 1082px 22px, #e8cdbb 0 1px, transparent 3px),
    radial-gradient(circle at 879px 24px, #a58d80 0 1px, transparent 2px),
    radial-gradient(circle at 968px 35px, #a58d80 0 1px, transparent 2px),
    radial-gradient(circle at 1210px 28px, #c0a59a 0 1px, transparent 3px),
    radial-gradient(circle at 1418px 37px, #d4b9ac 0 1px, transparent 4px),
    radial-gradient(circle at 1375px 38px, rgba(125, 85, 120, .7) 0, transparent 17px),
    linear-gradient(90deg, transparent 0 813px, #5c3f32 813px, #543a2e 950px, #56402f 1200px, #52402a 1600px),
    linear-gradient(90deg, transparent 0 237px, #a4917c 237px, #a08b75 806px, #b0a08e 806px 813px, transparent 813px),
    linear-gradient(180deg, rgba(190, 175, 155, .72) 0 7px, transparent 7px),
    linear-gradient(90deg, #4a3526 0, #59402b 75px, #996633 112px, #8b6440 150px, #80603f 237px);
`;

const Cell = styled.div`
  display: flex;
  align-items: center;
  justify-content: center;
  width: ${(p) => p.$w}px;
  height: 40px;
`;

const Running = styled.div`
  display: flex;
  align-items: center;
  justify-content: center;
  width: ${(p) => p.$w || 59}px;
  height: 40px;
  margin-right: ${(p) => p.$mr ?? 3}px;
  border: 1px solid #66574a;
  box-shadow: inset 0 0 0 1px ${(p) => (p.$active ? "#fffaf2" : "rgba(235, 225, 210, .65)")};
  background: ${(p) => (p.$active ? "linear-gradient(#b8ab9c, #d5cbc0)" : "rgba(205, 190, 170, .3)")};
`;

const Stack = styled.div`
  width: 4px;
  height: 40px;
  border: 1px solid #66574a;
  border-left: 0;
  box-shadow: inset -1px 0 ${(p) => (p.$active ? "#fffaf2" : "#d5c5af")};
`;

const Tray = styled.div`
  display: flex;
  margin-left: auto;
  height: 40px;
  align-items: center;
  color: #fff;
  font-size: 12px;
  letter-spacing: -0.7px;
`;

const TrayIcon = styled.div`
  width: ${(p) => p.$w}px;
  line-height: 0;
`;

const Lang = styled.div`
  width: 37px;
  letter-spacing: -0.3px;
`;

const Clock = styled.div`
  width: 62px;
  margin-right: 17px;
  padding-top: 2px;
  text-align: center;
  line-height: 17px;
`;

const Explorer = () => (
  <svg width="32" height="30" viewBox="0 0 32 30">
    <path d="M1 3H6L8 1H16L18 4H31V25H1Z" fill="#e4bf5a" />
    <rect x="3" y="3" width="7" height="5" fill="#fff" /><rect x="5" y="1" width="5" height="2.5" fill="#29a53c" />
    <rect x="11" y="5" width="8" height="4" fill="#fff" /><rect x="13" y="3" width="4" height="2" fill="#cf4a32" />
    <rect x="20" y="6" width="9" height="4" fill="#fff" /><rect x="22" y="5" width="4" height="2" fill="#3189d6" />
    <path d="M0 7H16L18 9H32L31 27H1Z" fill="#f9e59a" />
    <path d="M5 29V21Q5 17 9 17H24Q28 17 28 21V29H22V23H11V29Z" fill="#9ed3ee" stroke="#5b9cc4" />
    <path d="M6 20H27" stroke="#e4f6ff" strokeWidth="1.5" />
  </svg>
);

const TaskbarRow = () => (
  <Taskbar>
    <Cell $w={50}>
      <svg width="26" height="26" viewBox="0 0 26 26"><path d="M0 4L11 2.4V12.2H0ZM12 2.2L26 0V12.2H12ZM0 13.4H11V23.4L0 21.8ZM12 13.4H26V25.6L12 23.6Z" fill="#fff" /></svg>
    </Cell>
    <Cell $w={63}>
      <svg width="32" height="32" viewBox="0 0 32 32">
        <path d="M28.5 18H11.5Q12 23.5 17 23.5Q20 23.5 21.5 21.5H28Q25.5 29 17 29Q5 28.5 5 17Q5 5 17 5Q29 5 28.5 18ZM11.7 14H22Q21.5 10 17 10Q12.5 10 11.7 14Z" fill="#3db9ee" stroke="#1c7cb8" strokeWidth=".8" />
        <path d="M29 9Q31 1 23 3Q13 6 5 17Q-1 27 4 29Q6 30 10 28" fill="none" stroke="#f5c42c" strokeWidth="2.6" />
      </svg>
    </Cell>
    <Running>
      <svg width="32" height="34" viewBox="0 0 32 34">
        <defs><linearGradient id="npp" x1="0" y1="0" x2="0" y2="1"><stop offset="0" stopColor="#fff" /><stop offset=".4" stopColor="#e7f5dc" /><stop offset="1" stopColor="#3f9f16" /></linearGradient></defs>
        <rect x="2" y="3" width="23" height="29" fill="url(#npp)" stroke="#333" />
        <path d="M2 3H25" stroke="#777" strokeWidth="2.5" strokeDasharray="1.5 1.5" />
        <path d="M4 7H23M4 9.5H23" stroke="#bccbd9" strokeWidth=".7" />
        <path d="M7.5 21V12H9.5Q11.5 12 11.5 14V21M13.5 16.5H18M15.7 14.2V18.8M19 16.5H23.5M21.2 14.2V18.8" fill="none" stroke="#111" strokeWidth="1.5" />
        <path d="M19 27L29.5 4" stroke="#9c6a18" strokeWidth="4" /><path d="M19 27L29.5 4" stroke="#f6bd42" strokeWidth="2.4" />
        <path d="M28.8 5L30.5 1.8" stroke="#a82b35" strokeWidth="3.5" />
      </svg>
    </Running>
    <Running $w={54} $mr={0}><Explorer /></Running>
    <Stack />
    <Cell $w={66}>
      <svg width="31" height="31" viewBox="0 0 31 31">
        <circle cx="16" cy="15" r="14" fill="#1f5f9f" />
        <path d="M11 5Q18 1 24 8Q22 14 14 12Z" fill="#3aa0cf" />
        <path d="M22 3Q32 9 29.5 19Q26 30 15 30Q3 29 1 17Q1 10 4 6Q5 9 8 8Q11 7 14 10Q12 12 13.5 14Q9 15 11 18Q15 20 18 18Q21 19 18 22Q24 22 26 16Q27 9 22 3Z" fill="#e8691c" />
        <path d="M23 3Q32 10 29 20Q26 27 21 29Q28 19 26 11Z" fill="#f9c63a" />
        <path d="M2 14Q3 26 14 29Q5 22 6 13Z" fill="#c6401a" />
      </svg>
    </Cell>
    <Running>
      <svg width="30" height="30" viewBox="0 0 30 30">
        <circle cx="15" cy="15" r="14" fill="#fbd23c" />
        <path d="M15 15L2.6 8.5A14 14 0 0 1 27.8 9.5H15Z" fill="#da3d32" />
        <path d="M15 21.5L11.5 28.6A14 14 0 0 1 2.4 8.8L9.5 18Z" fill="#43a94b" />
        <circle cx="15" cy="15" r="6.4" fill="#f4f4f4" /><circle cx="15" cy="15" r="5.1" fill="#3673c5" />
      </svg>
    </Running>
    <Running>
      <svg width="32" height="26" viewBox="0 0 32 26">
        <path d="M4 1L17 4L12 18L0 14Z" fill="#a7dfa2" /><path d="M9 5L21 5L20 22L6 20Z" fill="#9fd0ef" /><path d="M13 8L27 4L32 20L17 25Z" fill="#f7e67b" />
      </svg>
    </Running>
    <Running $active $w={52} $mr={0}>
      <svg width="31" height="29" viewBox="0 0 31 29"><MatlabMark /></svg>
    </Running>
    <Stack $active /><Stack $active />
    <Tray>
      <TrayIcon $w={24}><svg width="9" height="5"><path d="M1 5L4.5 .5L8 5Z" fill="#fff" /></svg></TrayIcon>
      <TrayIcon $w={25}><svg width="15" height="14" viewBox="0 0 15 14"><path d="M0 2L6.5 1V6.5H0ZM7.5 .9L15 0V6.5H7.5ZM0 7.5H6.5V13L0 12ZM7.5 7.5H15V14L7.5 13Z" fill="#fff" /></svg></TrayIcon>
      <TrayIcon $w={23}><svg width="15" height="16" viewBox="0 0 15 16"><rect x="7.5" y="2" width="6" height="13" fill="none" stroke="#fff" strokeWidth="1.5" /><path d="M9.5 4.5H11.5V13H9.5ZM9 0H12V1.5H9ZM0 4H5.5V8H4V15H2V8H0ZM1 1H2V4H1ZM4 1H5V4H4Z" fill="#fff" /></svg></TrayIcon>
      <TrayIcon $w={26}><svg width="16" height="15" viewBox="0 0 16 15"><path d="M5 2.5H14.5V10.5H6M9.5 11V13.5M6 13.5H13" fill="none" stroke="#fff" strokeWidth="1.4" /><circle cx="2.5" cy="3.5" r="2" fill="none" stroke="#fff" strokeWidth="1.3" /><path d="M2.5 5.5V13.5" stroke="#fff" strokeWidth="1.5" /></svg></TrayIcon>
      <TrayIcon $w={28}><svg width="13" height="14" viewBox="0 0 13 14"><path d="M0 4.5H2.5L6.5 .5V13.5L2.5 9.5H0Z" fill="#fff" /><path d="M8.5 4Q10.5 7 8.5 10" fill="none" stroke="#eee" /><path d="M10.5 2.5Q13 7 10.5 11.5" fill="none" stroke="#a99f90" /></svg></TrayIcon>
      <Lang>FRA</Lang>
      <Clock>10:59<br />02/06/2015</Clock>
    </Tray>
  </Taskbar>
);

const range = (a, b, s) => Array.from({ length: Math.round((b - a) / s) + 1 }, (_, i) => a + s * i);

export default function App() {
  return (
    <Desktop>
      <GlobalStyle />
      <Windows>
        <FigureWindow title="Figure 1">
          <Plot viewBox="0 0 784 767">
            <Axes
              box="102,193 401,57 711,189 711,547 411,683 102,551"
              x={{ from: [102, 551], to: [411, 683], labels: range(-150, 150, 50).reverse(), text: [90, 570, 51.5, 22] }}
              y={{ to: [711, 547], labels: range(-100, 100, 50).reverse(), text: [422.5, 701, 74.5, -34] }}
              z={{ y0: 194, step: 59.5, labels: range(-30, 30, 10).reverse() }}
              names={{ x: [290.5, 728], y: [568, 707], z: "62,373" }}
            />
            <Terrain />
          </Plot>
        </FigureWindow>
        <FigureWindow title="Figure 5" active>
          <Plot viewBox="0 0 784 767">
            <text x="262.5" y="42.5" fontSize="28" textLength="284" lengthAdjust="spacingAndGlyphs">Reconstruction Surface</text>
            <Axes
              box="102,191 406.5,57 711,191 711,549 406,683 102,549"
              x={{ from: [102, 549], to: [406, 683], labels: range(-150, 150, 50).reverse(), text: [90, 568, 50.7, 22.3] }}
              y={{ to: [711, 549], labels: range(-100, 100, 50).reverse(), text: [417, 701, 75.7, -33.5] }}
              z={{ y0: 191.5, step: 51.1, labels: range(-20, 15, 5).reverse() }}
              names={{ x: [287.5, 727.5], y: [565.5, 707.5], z: "61.5,371" }}
            />
            <Surface />
          </Plot>
        </FigureWindow>
      </Windows>
      <TaskbarRow />
    </Desktop>
  );
}
